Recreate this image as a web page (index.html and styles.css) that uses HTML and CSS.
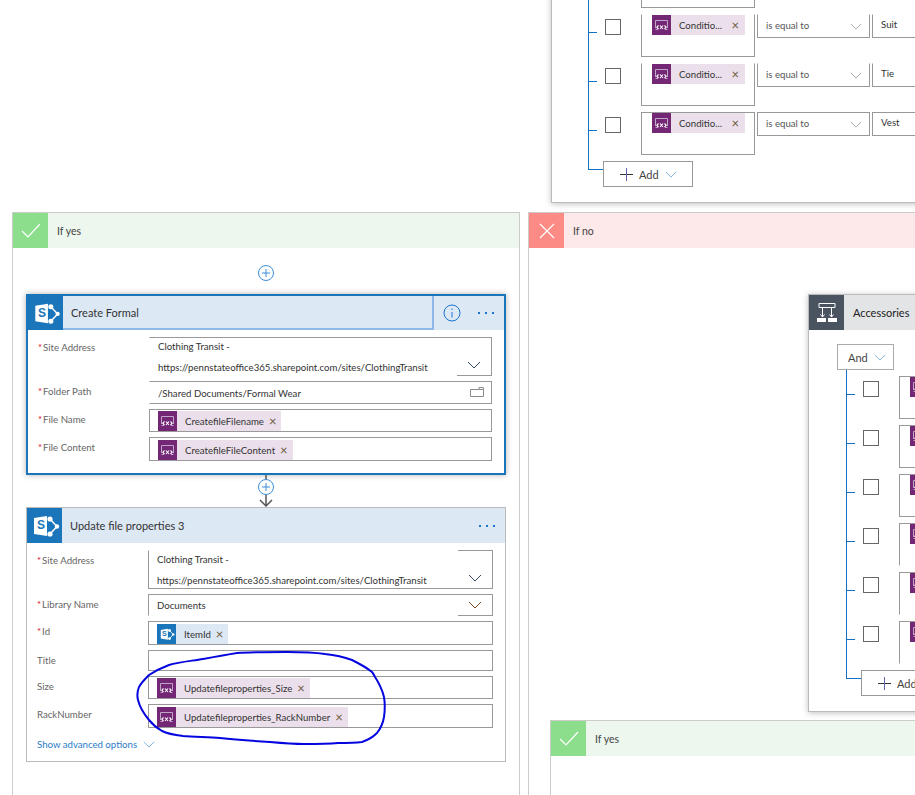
FILE: index.html
```html
<!DOCTYPE html>
<html>
<head>
	<meta charset="utf-8">
	<title>Flow designer</title>
	<link rel="stylesheet" href="styles.css">
</head>
<body>
<svg class="defs" width="0" height="0">
	<symbol id="sp" viewBox="0 0 35 35">
		<path d="M23 11L30 18.500L23 26" fill="none" stroke="#fff" stroke-width="1.500"/>
		<circle cx="23" cy="11" r="2.600" fill="#fff"/>
		<circle cx="30" cy="18.500" r="2.200" fill="#fff"/>
		<circle cx="23" cy="26" r="2.600" fill="#fff"/>
		<path d="M7 10L20 8V28L7 26Z" fill="#fff"/>
	</symbol>
	<symbol id="vars" viewBox="0 0 19 20">
		<path d="M3.500 13V5.500H15.500V13" fill="none" stroke="#bfa6c9" stroke-width="1"/>
		<path d="M3.500 14.500H6M13 14.500H15.500" stroke="#bfa6c9" stroke-width="1"/>
		<path d="M6.500 10.500L4.800 12.200L6.500 14M8 10.500L11 14M11 10.500L8 14M12.500 10.500L14.200 12.200L12.500 14" fill="none" stroke="#fff" stroke-width="1.100"/>
	</symbol>
	<symbol id="chev" viewBox="0 0 14 8">
		<path d="M1 1L7 7L13 1" fill="none" stroke="currentColor" stroke-width="1"/>
	</symbol>
</svg>

<div class="canvas">

	<!-- condition card cut off by the top of the window -->
	<div class="cond-card top-card">
		<div class="cond-list">
			<div class="cond-row">
				<span class="check"></span>
				<div class="cond-box"></div>
			</div>
			<div class="cond-row">
				<span class="check"></span>
				<div class="cond-box no-top">
					<span class="token"><svg class="token-icon"><use href="#vars"/></svg><span class="token-text">Conditio...</span><span class="token-x">×</span></span>
				</div>
				<div class="cond-select no-top">is equal to<svg class="chev grey"><use href="#chev"/></svg></div>
				<div class="cond-value no-top">Suit</div>
			</div>
			<div class="cond-row">
				<span class="check"></span>
				<div class="cond-box no-top">
					<span class="token"><svg class="token-icon"><use href="#vars"/></svg><span class="token-text">Conditio...</span><span class="token-x">×</span></span>
				</div>
				<div class="cond-select no-top">is equal to<svg class="chev grey"><use href="#chev"/></svg></div>
				<div class="cond-value no-top">Tie</div>
			</div>
			<div class="cond-row">
				<span class="check"></span>
				<div class="cond-box">
					<span class="token"><svg class="token-icon"><use href="#vars"/></svg><span class="token-text">Conditio...</span><span class="token-x">×</span></span>
				</div>
				<div class="cond-select">is equal to<svg class="chev grey"><use href="#chev"/></svg></div>
				<div class="cond-value">Vest</div>
			</div>
			<div class="add-btn"><span class="plus"></span>Add<svg class="chev blue"><use href="#chev"/></svg></div>
		</div>
	</div>

	<!-- if yes branch -->
	<div class="branch yes-branch">
		<div class="branch-head yes">
			<span class="branch-icon"><svg width="20" height="16" viewBox="0 0 20 16"><path d="M1 8L7 14L19 1" fill="none" stroke="#fff" stroke-width="1.200"/></svg></span>
			If yes
		</div>
		<div class="branch-body">
			<svg class="add-step" width="18" height="18" viewBox="0 0 18 18"><circle cx="9" cy="9" r="7.500" fill="#fff" stroke="#3a8fd8"/><path d="M9 5V13M5 9H13" stroke="#3a8fd8"/></svg>

			<div class="card active">
				<div class="card-head">
					<span class="sp-icon head-icon"><svg><use href="#sp"/></svg><b>S</b></span>
					<div class="card-title focus">Create Formal</div>
					<svg class="info" width="18" height="18" viewBox="0 0 18 18"><circle cx="9" cy="9" r="8" fill="none" stroke="#1b75d0"/><path d="M9 8V13.500M9 4.500V6" stroke="#1b75d0"/></svg>
					<span class="dots"><i></i><i></i><i></i></span>
				</div>
				<div class="card-body">
					<div class="form-row tall">
						<label class="lbl req">Site Address</label>
						<div class="field no-left no-bottom two-lines">
							<span>Clothing Transit -</span>
							<span>https://pennstateoffice365.sharepoint.com/sites/ClothingTransit</span>
							<span class="drop under"><svg class="chev dark"><use href="#chev"/></svg></span>
						</div>
					</div>
					<div class="form-row">
						<label class="lbl req">Folder Path</label>
						<div class="field no-left">
							<span>/Shared Documents/Formal Wear</span>
							<svg class="folder" width="14" height="10" viewBox="0 0 14 10"><path d="M.5 2.500H13.500V9.500H.5ZM9 2.500V.5H13.500V2.500" fill="none" stroke="#8a8a8a"/></svg>
						</div>
					</div>
					<div class="form-row">
						<label class="lbl req">File Name</label>
						<div class="field has-token">
							<span class="token"><svg class="token-icon"><use href="#vars"/></svg><span class="token-text">CreatefileFilename</span><span class="token-x">×</span></span>
						</div>
					</div>
					<div class="form-row h24">
						<label class="lbl req">File Content</label>
						<div class="field has-token">
							<span class="token"><svg class="token-icon"><use href="#vars"/></svg><span class="token-text">CreatefileFileContent</span><span class="token-x">×</span></span>
						</div>
					</div>
				</div>
			</div>

			<svg class="connector" width="20" height="32" viewBox="0 0 20 32"><path d="M10 0V31M4 25L10 31L16 25" fill="none" stroke="#555" stroke-width="1.500"/><circle cx="10" cy="12" r="7.500" fill="#fff" stroke="#3a8fd8"/><path d="M10 8V16M6 12H14" stroke="#3a8fd8"/></svg>

			<div class="card">
				<div class="card-head">
					<span class="sp-icon head-icon"><svg><use href="#sp"/></svg><b>S</b></span>
					<div class="card-title">Update file properties 3</div>
					<span class="dots"><i></i><i></i><i></i></span>
				</div>
				<div class="card-body">
					<div class="form-row tall">
						<label class="lbl req">Site Address</label>
						<div class="field no-top two-lines">
							<span>Clothing Transit -</span>
							<span>https://pennstateoffice365.sharepoint.com/sites/ClothingTransit</span>
							<span class="drop over"><svg class="chev dark"><use href="#chev"/></svg></span>
						</div>
					</div>
					<div class="form-row h22">
						<label class="lbl req">Library Name</label>
						<div class="field no-bottom">
							<span>Documents</span>
							<span class="drop under"><svg class="chev brown"><use href="#chev"/></svg></span>
						</div>
					</div>
					<div class="form-row h24">
						<label class="lbl req">Id</label>
						<div class="field has-token">
							<span class="token sp-token"><span class="sp-icon token-icon"><svg><use href="#sp"/></svg><b>S</b></span><span class="token-text">ItemId</span><span class="token-x">×</span></span>
						</div>
					</div>
					<div class="form-row h21">
						<label class="lbl">Title</label>
						<div class="field"></div>
					</div>
					<div class="form-row">
						<label class="lbl">Size</label>
						<div class="field has-token">
							<span class="token"><svg class="token-icon"><use href="#vars"/></svg><span class="token-text">Updatefileproperties_Size</span><span class="token-x">×</span></span>
						</div>
					</div>
					<div class="form-row h24">
						<label class="lbl">RackNumber</label>
						<div class="field has-token">
							<span class="token"><svg class="token-icon"><use href="#vars"/></svg><span class="token-text">Updatefileproperties_RackNumber</span><span class="token-x">×</span></span>
						</div>
					</div>
					<div class="advanced">Show advanced options<svg class="chev blue"><use href="#chev"/></svg></div>
				</div>
			</div>
		</div>
	</div>

	<!-- if no branch -->
	<div class="branch no-branch">
		<div class="branch-head no">
			<span class="branch-icon"><svg width="16" height="16" viewBox="0 0 16 16"><path d="M1 1L15 15M15 1L1 15" fill="none" stroke="#fff" stroke-width="1.200"/></svg></span>
			If no
		</div>
	</div>

	<div class="cond-card acc-card">
		<div class="acc-head">
			<span class="acc-icon"><svg width="20" height="20" viewBox="0 0 20 20"><path d="M2 .5H18V4.500H2ZM5.500 4.500V14M14.500 4.500V14M3.500 11.500L5.500 14L7.500 11.500M12.500 11.500L14.500 14L16.500 11.500" fill="none" stroke="#fff"/><path d="M0 15H9V19H0ZM11 15H20V19H11Z" fill="#fff"/></svg></span>
			Accessories
		</div>
		<div class="and-btn">And<svg class="chev blue"><use href="#chev"/></svg></div>
		<div class="cond-list acc-list">
			<div class="cond-row"><span class="check"></span><div class="cond-box"><span class="token"><svg class="token-icon"><use href="#vars"/></svg></span></div></div>
			<div class="cond-row"><span class="check"></span><div class="cond-box"><span class="token"><svg class="token-icon"><use href="#vars"/></svg></span></div></div>
			<div class="cond-row"><span class="check"></span><div class="cond-box"><span class="token"><svg class="token-icon"><use href="#vars"/></svg></span></div></div>
			<div class="cond-row"><span class="check"></span><div class="cond-box no-bottom"><span class="token"><svg class="token-icon"><use href="#vars"/></svg></span></div></div>
			<div class="cond-row"><span class="check"></span><div class="cond-box no-bottom"><span class="token"><svg class="token-icon"><use href="#vars"/></svg></span></div></div>
			<div class="cond-row"><span class="check"></span><div class="cond-box no-bottom"><span class="token"><svg class="token-icon"><use href="#vars"/></svg></span></div></div>
			<div class="add-btn"><span class="plus"></span>Add<svg class="chev blue"><use href="#chev"/></svg></div>
		</div>
	</div>

	<div class="branch yes-lower">
		<div class="branch-head yes">
			<span class="branch-icon"><svg width="20" height="16" viewBox="0 0 20 16"><path d="M1 8L7 14L19 1" fill="none" stroke="#fff" stroke-width="1.200"/></svg></span>
			If yes
		</div>
	</div>

	<!-- hand drawn circle around the two fields -->
	<svg class="scribble" width="915" height="795" viewBox="0 0 915 795">
		<path d="M372 672C366 667 360 664 352 660C344 657 335 655 325 654C312 652 300 652 287 652C270 652 253 652 237 653C225 655 214 657 203 659C191 661 179 662 169 665C161 668 155 671 149 675C145 679 141 683 139 687C137 692 137 696 138 700C140 708 144 714 149 720C153 725 157 728 162 731C168 734 175 735 183 736C195 737 208 737 220 738C237 740 253 741 270 742C281 743 293 744 304 744C315 744 327 744 338 743C346 743 354 743 362 742C368 740 373 737 377 733C381 728 383 723 384 717C385 710 385 703 384 697C382 689 379 683 375 677C374 675 373 673 372 672Z" fill="none" stroke="#0505e0" stroke-width="2"/>
	</svg>
</div>
</body>
</html>
```

FILE: styles.css
```css
*{
	box-sizing: border-box;
}
body{
	margin: 0;
	background: #fff;
	font-family: Lato, "Liberation Sans", sans-serif;
	font-size: 9.650px;
	color: #333;
}
.defs{
	position: absolute;
}
.canvas{
	position: relative;
	width: 915px;
	height: 795px;
	overflow: hidden;
}

/* branches */
.branch{
	position: absolute;
	border: 1px solid #ccc;
	background: #fff;
}
.yes-branch{
	left: 12px;
	top: 212px;
	width: 508px;
	height: 600px;
}
.no-branch{
	left: 528px;
	top: 212px;
	width: 420px;
	height: 600px;
}
.yes-lower{
	left: 550px;
	top: 720px;
	width: 400px;
	height: 100px;
}
.branch-head{
	display: flex;
	align-items: center;
	height: 35px;
	font-size: 10.500px;
	color: #444;
}
.branch-head.yes{
	background: #edf7ee;
}
.branch-head.no{
	background: #fde9e9;
}
.branch-icon{
	display: flex;
	align-items: center;
	justify-content: center;
	width: 35px;
	height: 35px;
	margin-right: 9px;
}
.yes .branch-icon{
	background: #8cdd8c;
}
.no .branch-icon{
	background: #fc8a85;
}
.branch-body{
	display: flex;
	flex-direction: column;
	align-items: center;
	padding: 16px 13px 0;
}
.add-step{
	display: block;
	margin-bottom: 12px;
}
.connector{
	display: block;
	flex: none;
}

/* action cards */
.card{
	width: 480px;
	border: 1px solid #bbb;
	background: #fff;
}
.card.active{
	border: 2px solid #1b75bb;
	box-shadow: 0 0 6px rgba(0,0,0,.3);
}
.card-head{
	display: flex;
	align-items: center;
	height: 35px;
	background: #dce8f4;
}
.card.active .card-head{
	height: 34px;
}
.sp-icon{
	position: relative;
	display: block;
	background: #1b75bb;
}
.sp-icon svg{
	display: block;
	width: 100%;
	height: 100%;
}
.sp-icon b{
	position: absolute;
	left: 10px;
	top: 10px;
	font: 700 12px "Liberation Sans", sans-serif;
	color: #1b75bb;
}
.token-icon.sp-icon b{
	left: 5px;
	top: 6px;
	font-size: 7px;
}
.head-icon{
	flex: none;
	width: 35px;
	height: 100%;
}
.card-title{
	flex: 1;
	align-self: stretch;
	display: flex;
	align-items: center;
	padding-left: 8px;
	font-size: 11px;
	color: #333;
}
.card-title.focus{
	flex: none;
	width: 371px;
	border: 1px solid #8db8ea;
	border-width: 0 2px 2px 0;
}
.info{
	margin-left: 9px;
}
.dots{
	display: flex;
	gap: 5px;
	margin-left: auto;
	margin-right: 10px;
}
.dots i{
	width: 2px;
	height: 2px;
	background: #1b75d0;
}
.card-body{
	display: flex;
	flex-direction: column;
	gap: 5px;
	padding: 7px 12px 10px 10px;
}
.card.active .card-body{
	padding-bottom: 12px;
}
.form-row{
	display: flex;
	height: 23px;
}
.form-row.tall{
	height: 39px;
}
.form-row.h21{
	height: 21px;
}
.form-row.h22{
	height: 22px;
}
.form-row.h24{
	height: 24px;
}
.lbl{
	flex: none;
	width: 111px;
	padding: 4px 0 0 0;
	color: #666;
}
.lbl.req::before{
	content: "*";
	color: #e0112b;
	margin-right: 1px;
}
.field{
	position: relative;
	flex: 1;
	display: flex;
	align-items: center;
	padding-left: 8px;
	border: 1px solid #999;
	color: #333;
}
.field.has-token{
	align-items: flex-end;
}
.field.no-left{
	border-left-color: transparent;
}
.field.no-top{
	border-top-color: transparent;
}
.field.no-bottom{
	border-bottom-color: transparent;
}
.field.two-lines{
	flex-direction: column;
	align-items: flex-start;
	justify-content: space-between;
	padding-top: 2px;
	padding-bottom: 2px;
}
.drop{
	position: absolute;
	right: -1px;
	bottom: -1px;
	display: flex;
	align-items: center;
	justify-content: center;
	width: 35px;
	height: 22px;
	padding-right: 2px;
}
.drop.under{
	border-bottom: 1px solid #999;
}
.drop.over{
	bottom: auto;
	top: -1px;
	height: 38px;
	padding-top: 17px;
	border-top: 1px solid #999;
}
.folder{
	position: absolute;
	right: 7px;
	top: 5px;
}
.advanced{
	display: flex;
	align-items: center;
	margin-top: 4px;
	height: 14px;
	color: #2a7cc7;
}

/* dynamic content tokens */
.token{
	display: inline-flex;
	align-items: center;
	height: 20px;
	background: #ebdfeb;
	white-space: nowrap;
}
.token-icon{
	flex: none;
	width: 19px;
	height: 20px;
	background: #742774;
}
.token-text{
	margin-left: 8px;
	color: #333;
}
.token-x{
	margin: 0 5px 0 5px;
	font-size: 13px;
	line-height: 13px;
	color: #6b5a3c;
}
.sp-token{
	background: #dce8f4;
}
.sp-token .token-icon{
	background: #1b75bb;
}

/* chevrons */
.chev{
	flex: none;
	width: 12px;
	height: 7px;
}
.chev.grey{
	color: #999;
	margin-left: auto;
	margin-right: 7px;
}
.chev.blue{
	color: #6ea6d8;
	margin-left: 6px;
}
.chev.dark{
	width: 14px;
	height: 8px;
	color: #33495f;
}
.chev.brown{
	width: 14px;
	height: 8px;
	color: #7a4a20;
}

/* condition cards */
.cond-card{
	position: absolute;
	border: 1px solid #bbb;
	background: #fff;
	box-shadow: 0 1px 6px rgba(0,0,0,.25);
}
.top-card{
	left: 551px;
	top: -40px;
	width: 420px;
	height: 243px;
	padding: 4px 0 0 36px;
}
.acc-card{
	left: 808px;
	top: 294px;
	width: 200px;
	height: 418px;
}
.acc-head{
	display: flex;
	align-items: center;
	height: 35px;
	background: #e3e4e6;
	font-size: 11px;
	color: #222;
}
.acc-icon{
	display: flex;
	align-items: center;
	justify-content: center;
	width: 35px;
	height: 35px;
	margin-right: 9px;
	background: #4a5360;
}
.and-btn{
	display: flex;
	align-items: center;
	width: 57px;
	height: 26px;
	margin: 14px 0 0 28px;
	padding-left: 10px;
	border: 1px solid #aaa;
	font-size: 11px;
	color: #444;
}
.cond-list{
	position: relative;
}
.cond-list::before{
	content: "";
	position: absolute;
	left: 0;
	top: 0;
	bottom: 18px;
	border-left: 1px solid #0f72c4;
}
.acc-list{
	margin-left: 37px;
	padding-top: 6px;
}
.acc-list .add-btn{
	margin-top: 1px;
}
.cond-row{
	position: relative;
	display: flex;
	height: 43px;
	margin-bottom: 6px;
	padding-left: 17px;
}
.cond-row::before{
	content: "";
	position: absolute;
	left: 0;
	top: 18px;
	width: 9px;
	border-top: 1px solid #0f72c4;
}
.check{
	flex: none;
	width: 16px;
	height: 16px;
	margin: 5px 20px 0 0;
	border: 1px solid #666;
}
.cond-box{
	flex: none;
	width: 114px;
	height: 43px;
	margin-right: 2px;
	padding-left: 10px;
	border: 1px solid #999;
}
.cond-box.no-top{
	border-top-color: transparent;
}
.cond-box.no-bottom{
	border-bottom-color: transparent;
	border-right-color: transparent;
}
.cond-box .token{
	width: 93px;
}
.acc-list .cond-box .token{
	width: auto;
}
.cond-box .token-x{
	margin-left: auto;
	margin-right: 6px;
}
.cond-select{
	flex: none;
	display: flex;
	align-items: center;
	width: 113px;
	height: 24px;
	margin-right: 2px;
	padding: 0 0 3px 8px;
	border: 1px solid #999;
	color: #555;
}
.cond-select .chev{
	margin-top: 3px;
}
.cond-value{
	flex: none;
	width: 70px;
	height: 24px;
	padding: 3px 0 0 8px;
	border: 1px solid #999;
}
.cond-select.no-top,
.cond-value.no-top{
	border-top-color: transparent;
}
.add-btn{
	position: relative;
	display: flex;
	align-items: center;
	width: 90px;
	height: 26px;
	margin: 2px 0 0 15px;
	padding-left: 16px;
	border: 1px solid #999;
	font-size: 11px;
	color: #444;
}
.add-btn::before{
	content: "";
	position: absolute;
	left: -16px;
	top: 7px;
	width: 15px;
	border-top: 1px solid #0f72c4;
}
.plus{
	position: relative;
	width: 13px;
	height: 13px;
	margin-right: 6px;
}
.plus::before{
	content: "";
	position: absolute;
	left: 0;
	top: 6px;
	width: 13px;
	border-top: 1px solid #333;
}
.plus::after{
	content: "";
	position: absolute;
	left: 6px;
	top: 0;
	height: 13px;
	border-left: 1px solid #6264a7;
}

/* pen mark on top of everything */
.scribble{
	position: absolute;
	left: 0;
	top: 0;
	pointer-events: none;
}
```
